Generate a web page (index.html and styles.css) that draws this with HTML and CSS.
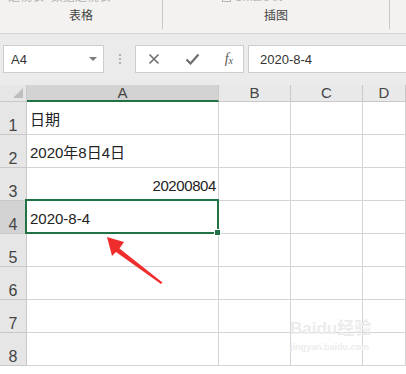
FILE: index.html
```html
<!DOCTYPE html>
<html lang="zh-CN">
<head>
    <meta charset="UTF-8">
    <title>日期格式</title>
    <link rel="stylesheet" href="styles.css">
</head>
<body>
<div class="page">

    <!-- ribbon (bottom part only) -->
    <div class="ribbon">
        <div class="group group-table">
            <div class="faded">透视表&nbsp;&nbsp;数据透视表</div>
            <div class="group-label">表格</div>
        </div>
        <div class="group group-pic">
            <div class="faded"><span class="faded-box"></span>SmartArt</div>
            <div class="group-label">插图</div>
        </div>
        <div class="group group-rest"></div>
    </div>

    <!-- formula bar -->
    <div class="formula-bar">
        <div class="name-box">
            <span>A4</span>
            <span class="caret"></span>
        </div>
        <div class="grip"><i></i><i></i><i></i></div>
        <div class="fx-buttons">
            <svg width="12" height="12" viewBox="0 0 12 12"><path d="M1.5 1.5 L10.5 10.5 M10.5 1.5 L1.5 10.5" stroke="#6e6e6e" stroke-width="1.6" fill="none"/></svg>
            <svg width="15" height="12" viewBox="0 0 15 12"><path d="M1.5 6.5 L5.5 10.5 L13.5 1.5" stroke="#6e6e6e" stroke-width="2.2" fill="none"/></svg>
            <span class="fx">f<sub>x</sub></span>
        </div>
        <div class="formula-input">2020-8-4</div>
    </div>

    <!-- sheet -->
    <div class="sheet">
        <div class="corner"><span class="tri"></span></div>
        <div class="col-head active">A</div>
        <div class="col-head">B</div>
        <div class="col-head">C</div>
        <div class="col-head">D</div>

        <div class="row-head">1</div>
        <div class="cell">日期</div><div class="cell"></div><div class="cell"></div><div class="cell"></div>

        <div class="row-head">2</div>
        <div class="cell">2020年8日4日</div><div class="cell"></div><div class="cell"></div><div class="cell"></div>

        <div class="row-head">3</div>
        <div class="cell num">20200804</div><div class="cell"></div><div class="cell"></div><div class="cell"></div>

        <div class="row-head active">4</div>
        <div class="cell selected">2020-8-4<span class="handle"></span></div><div class="cell"></div><div class="cell"></div><div class="cell"></div>

        <div class="row-head">5</div>
        <div class="cell"></div><div class="cell"></div><div class="cell"></div><div class="cell"></div>

        <div class="row-head">6</div>
        <div class="cell"></div><div class="cell"></div><div class="cell"></div><div class="cell"></div>

        <div class="row-head">7</div>
        <div class="cell"></div><div class="cell"></div><div class="cell"></div><div class="cell"></div>

        <div class="row-head">8</div>
        <div class="cell"></div><div class="cell"></div><div class="cell"></div><div class="cell"></div>
    </div>

    <!-- annotation arrow -->
    <svg class="arrow" width="406" height="374" viewBox="0 0 406 374">
        <polygon points="107,237 124,242 119.5,248.5 162.5,282.5 161,284 116,252 112,256" fill="#ef2d2d"/>
    </svg>

    <div class="watermark">
        <div class="wm-main">Bai<span class="wm-paw">du</span>经验</div>
        <div class="wm-sub">jingyan.baidu.com</div>
    </div>
</div>
</body>
</html>
```

FILE: styles.css
```css
/* General */
body {
    margin: 0;
    padding: 0;
    font-family: "Liberation Sans", "Noto Sans CJK SC", sans-serif;
    color: #333;
    background: #fff;
}
.page {
    position: relative;
    width: 406px;
    height: 374px;
    overflow: hidden;
}

/* Ribbon */
.ribbon {
    display: flex;
    height: 33px;
    background-color: #f3f2f1;
    border-bottom: 1px solid #d5d5d5;
    overflow: hidden;
}
.group {
    display: flex;
    flex-direction: column;
    align-items: center;
    border-right: 1px solid #c9c9c9;
    height: 29px;
}
.group-table {
    width: 162px;
}
.group-pic {
    width: 226px;
}
.group-rest {
    flex: 1;
    border-right: none;
}
.faded {
    margin-top: -9px;
    height: 13px;
    font-size: 12px;
    line-height: 13px;
    color: #b5b5b5;
    display: flex;
    align-items: center;
    white-space: nowrap;
}
.group-table .faded {
    align-self: flex-start;
    margin-left: 8px;
}
.group-pic .faded {
    margin-left: -48px;
}
.faded-box {
    display: inline-block;
    width: 7px;
    height: 7px;
    border: 1px solid #b5b5b5;
    margin-right: 4px;
}
.group-label {
    margin-top: 4px;
    font-family: "Noto Sans CJK SC", sans-serif;
    font-size: 12px;
    line-height: 14px;
    color: #444;
}

/* Formula bar */
.formula-bar {
    display: flex;
    align-items: flex-start;
    height: 51px;
    padding-top: 11px;
    box-sizing: border-box;
    background-color: #ebebeb;
}
.name-box {
    margin-left: 3px;
    width: 101px;
    height: 28px;
    box-sizing: border-box;
    background: #fff;
    border: 1px solid #cdcdcd;
    display: flex;
    align-items: center;
    justify-content: space-between;
    padding: 0 6px 0 7px;
    font-size: 13px;
    color: #333;
}
.caret {
    width: 0;
    height: 0;
    border-left: 4px solid transparent;
    border-right: 4px solid transparent;
    border-top: 4px solid #7a7a7a;
}
.grip {
    width: 31px;
    height: 28px;
    display: flex;
    flex-direction: column;
    align-items: center;
    justify-content: center;
    gap: 2px;
}
.grip i {
    display: block;
    width: 2px;
    height: 2px;
    background: #b3b3b3;
}
.fx-buttons {
    width: 109px;
    height: 28px;
    box-sizing: border-box;
    background: #fff;
    border: 1px solid #cdcdcd;
    display: flex;
    align-items: center;
    justify-content: space-between;
    padding: 0 10px 0 12px;
}
.fx {
    font-family: "Liberation Serif", serif;
    font-style: italic;
    font-size: 14px;
    color: #555;
}
.fx sub {
    font-size: 10px;
    vertical-align: -1px;
}
.formula-input {
    margin-left: 4px;
    margin-right: -3px;
    flex: 1;
    height: 28px;
    box-sizing: border-box;
    background: #fff;
    border: 1px solid #cdcdcd;
    display: flex;
    align-items: center;
    padding-left: 11px;
    font-size: 13px;
    color: #333;
}

/* Sheet grid */
.sheet {
    display: grid;
    grid-template-columns: 27px 192px 72px 72px 1fr;
    grid-template-rows: 17px repeat(9, 33px);
    background: #fff;
}
.corner,
.col-head {
    background: #e9e9e9;
    border-right: 1px solid #c9c9c9;
    border-bottom: 1px solid #c9c9c9;
    box-sizing: border-box;
}
.corner {
    position: relative;
    background: #e6e6e6;
}
.tri {
    position: absolute;
    right: 3px;
    bottom: 3px;
    width: 0;
    height: 0;
    border-left: 10px solid transparent;
    border-bottom: 10px solid #bdbdbd;
}
.col-head {
    text-align: center;
    font-size: 15px;
    line-height: 16px;
    color: #444;
}
.col-head.active {
    background: #d3d3d3;
    border-bottom: 2px solid #217346;
    line-height: 15px;
}
.row-head {
    background: #e6e6e6;
    border-right: 1px solid #c9c9c9;
    border-bottom: 1px solid #c9c9c9;
    box-sizing: border-box;
    display: flex;
    align-items: flex-end;
    justify-content: center;
    font-size: 16px;
    line-height: 16px;
    color: #444;
}
.row-head.active {
    background: #d3d3d3;
}
.cell {
    border-right: 1px solid #d4d4d4;
    border-bottom: 1px solid #d4d4d4;
    box-sizing: border-box;
    display: flex;
    align-items: center;
    padding: 3px 3px 0 3px;
    font-size: 15px;
    line-height: 15px;
    color: #222;
    white-space: nowrap;
}
.cell.num {
    justify-content: flex-end;
    letter-spacing: -0.4px;
    padding-right: 2px;
}
.cell.selected {
    position: relative;
}
.cell.selected::before {
    content: "";
    position: absolute;
    top: -2px;
    left: -2px;
    right: -1px;
    bottom: -1px;
    border: 2px solid #217346;
}
.handle {
    position: absolute;
    right: -3px;
    bottom: -3px;
    width: 5px;
    height: 5px;
    background: #217346;
    border: 1px solid #fff;
}

/* Overlays */
.arrow {
    position: absolute;
    top: 0;
    left: 0;
    pointer-events: none;
}
.watermark {
    position: absolute;
    left: 290px;
    top: 320px;
    color: #ececec;
    font-weight: bold;
    pointer-events: none;
}
.wm-main {
    font-size: 17px;
    line-height: 18px;
}
.wm-sub {
    font-size: 9px;
    line-height: 12px;
    margin-top: 3px;
}
```
